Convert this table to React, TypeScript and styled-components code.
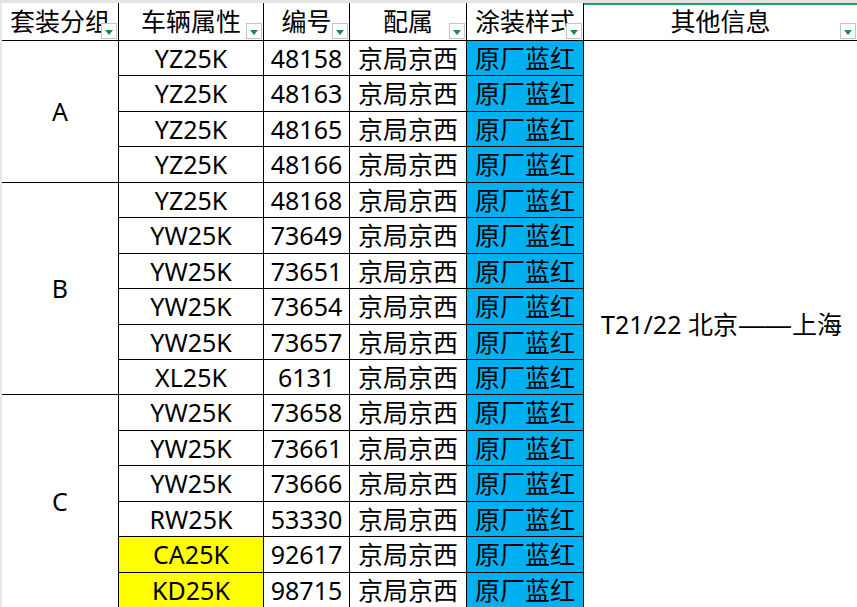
import React from "react";
import styled, { createGlobalStyle, css } from "styled-components";

const GlobalStyle = createGlobalStyle`
  html, body {
    margin: 0;
    padding: 0;
    background: #ffffff;
    overflow: hidden;
  }
  body {
    font-family: "Noto Sans", "Noto Sans CJK SC", sans-serif;
    color: #000;
  }
`;

const ROW_HEIGHTS = [35, 36, 35, 36, 35, 36, 35, 36, 35, 35, 36, 35, 36, 35, 36, 35];

const Sheet = styled.div`
  display: grid;
  grid-template-columns: 2px 117px 145px 86px 117px 117px 1fr;
  grid-template-rows: 3px 38px ${ROW_HEIGHTS.map((h) => `${h}px`).join(" ")};
  width: 857px;
  height: 607px;
  overflow: hidden;
  font-size: 25px;
  line-height: 1;
`;

const TopStrip = styled.div`
  grid-column: 1 / -1;
  grid-row: 1;
  background: #e3e3e3;
`;

const Gutter = styled.div`
  grid-column: 1;
  grid-row: 2 / -1;
  background: #e6e6e6;
`;

const cellBase = css`
  box-sizing: border-box;
  display: flex;
  align-items: center;
  justify-content: center;
  white-space: nowrap;
  overflow: hidden;
  border-right: 1px solid #000;
  border-bottom: 1px solid #000;
`;

const HeaderCell = styled.div<{ $col: number; $active?: boolean }>`
  ${cellBase}
  position: relative;
  grid-row: 2;
  grid-column: ${(p) => p.$col};
  padding-bottom: 1px;
  ${(p) =>
    p.$active &&
    css`
      border-right: none;
      box-shadow: inset 0 2px 0 #21a366;
    `}
`;

const FilterButton = styled.span`
  position: absolute;
  right: 1px;
  bottom: 1px;
  width: 16px;
  height: 16px;
  box-sizing: border-box;
  background: #fff;
  border: 1px solid #c4c4c4;
  display: flex;
  align-items: center;
  justify-content: center;
  z-index: 1;
`;

const Triangle = styled.span`
  width: 0;
  height: 0;
  margin-top: 3px;
  border-left: 4px solid transparent;
  border-right: 4px solid transparent;
  border-top: 5px solid #1a8a55;
`;

const GroupCell = styled.div<{ $start: number; $span: number }>`
  ${cellBase}
  grid-column: 2;
  grid-row: ${(p) => `${p.$start} / span ${p.$span}`};
`;

const Cell = styled.div<{ $col: number; $row: number; $bg?: string }>`
  ${cellBase}
  grid-column: ${(p) => p.$col};
  grid-row: ${(p) => p.$row};
  background: ${(p) => p.$bg ?? "#fff"};
`;

const InfoCell = styled.div`
  grid-column: 7;
  grid-row: 3 / -1;
  display: flex;
  align-items: center;
  justify-content: center;
  white-space: nowrap;
  padding-left: 2px;
`;

const Dash = styled.span`
  font-family: "Liberation Sans", sans-serif;
  font-size: 26px;
  margin: 0 1px;
`;

type Row = { type: string; no: string; highlight?: boolean };
type Group = { name: string; rows: Row[] };

const GROUPS: Group[] = [
  {
    name: "A",
    rows: [
      { type: "YZ25K", no: "48158" },
      { type: "YZ25K", no: "48163" },
      { type: "YZ25K", no: "48165" },
      { type: "YZ25K", no: "48166" },
    ],
  },
  {
    name: "B",
    rows: [
      { type: "YZ25K", no: "48168" },
      { type: "YW25K", no: "73649" },
      { type: "YW25K", no: "73651" },
      { type: "YW25K", no: "73654" },
      { type: "YW25K", no: "73657" },
      { type: "XL25K", no: "6131" },
    ],
  },
  {
    name: "C",
    rows: [
      { type: "YW25K", no: "73658" },
      { type: "YW25K", no: "73661" },
      { type: "YW25K", no: "73666" },
      { type: "RW25K", no: "53330" },
      { type: "CA25K", no: "92617", highlight: true },
      { type: "KD25K", no: "98715", highlight: true },
    ],
  },
];

const HEADERS = ["套装分组", "车辆属性", "编号", "配属", "涂装样式", "其他信息"];

const Filter = () => (
  <FilterButton>
    <Triangle />
  </FilterButton>
);

export default function App() {
  let rowIndex = 3;
  const groupEls: React.ReactNode[] = [];
  const rowEls: React.ReactNode[] = [];

  GROUPS.forEach((g) => {
    groupEls.push(
      <GroupCell key={`g-${g.name}`} $start={rowIndex} $span={g.rows.length}>
        {g.name}
      </GroupCell>
    );
    g.rows.forEach((r) => {
      const row = rowIndex;
      rowEls.push(
        <React.Fragment key={`r-${row}`}>
          <Cell $col={3} $row={row} $bg={r.highlight ? "#ffff00" : undefined}>
            {r.type}
          </Cell>
          <Cell $col={4} $row={row}>
            {r.no}
          </Cell>
          <Cell $col={5} $row={row}>
            京局京西
          </Cell>
          <Cell $col={6} $row={row} $bg="#00b0f0">
            原厂蓝红
          </Cell>
        </React.Fragment>
      );
      rowIndex += 1;
    });
  });

  return (
    <>
      <GlobalStyle />
      <Sheet>
        <TopStrip />
        <Gutter />
        {HEADERS.map((h, i) => (
          <HeaderCell key={h} $col={i + 2} $active={i === 5}>
            {h}
            <Filter />
          </HeaderCell>
        ))}
        {groupEls}
        {rowEls}
        <InfoCell>
          T21/22 北京<Dash>——</Dash>上海
        </InfoCell>
      </Sheet>
    </>
  );
}
